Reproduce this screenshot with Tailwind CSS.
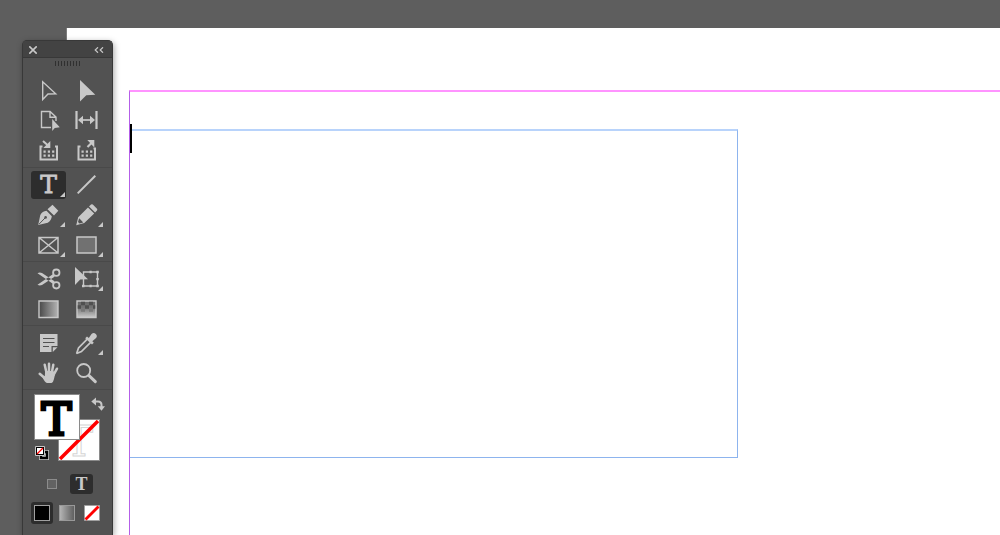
<!DOCTYPE html>
<html lang="en">
<head>
    <meta charset="UTF-8">
    <meta name="viewport" content="width=device-width, initial-scale=1.0">
    <title>Layout Editor</title>
    <script src="https://cdn.jsdelivr.net/npm/@tailwindcss/browser@4"></script>
</head>
<body class="relative h-screen overflow-hidden bg-[#5e5e5e] font-['Liberation_Sans',sans-serif]">

    <!-- Document page with its margin guides -->
    <main class="absolute top-7 right-0 bottom-0 left-[66px] flex border-l border-[#7c7c7c] bg-white pt-[62px] pl-[62px]">
        <section class="flex-1 border-t-2 border-l border-t-[#ff94ff] border-l-[#b45ee8] pt-[37px]">
            <div class="relative h-[329px] w-[69.9%]">
                <textarea aria-label="Text frame" class="block h-full w-full resize-none border border-t-2 border-l-0 border-[#8db4ee] border-t-[#b8d3fb] outline-none"></textarea>
                <span class="absolute -top-[5px] left-0 h-[29px] w-0.5 bg-black"></span>
            </div>
        </section>
    </main>

    <!-- Tools panel -->
    <aside class="absolute top-10 bottom-0 left-[22px] w-[91px] rounded-t-[5px] border border-b-0 border-[#383838] bg-[#525252] text-[#c8c8c8] shadow-[1px_2px_6px_rgba(0,0,0,0.35)]">
        <header class="flex h-4 items-center justify-between rounded-t bg-[#434343] px-1.5 pt-0.5">
            <button aria-label="Close">
                <svg class="block size-2" viewBox="0 0 8 8" fill="none" stroke="currentColor" stroke-width="1.6"><path d="M.3.3l7.400 7.400M7.700.3l-7.400 7.400"/></svg>
            </button>
            <button aria-label="Collapse">
                <svg class="mr-0.5 block h-1.5 w-2.5" viewBox="0 0 10 6" fill="none" stroke="currentColor" stroke-width="1.2"><path d="M4 .3L1.200 3 4 5.700M9 .3L6.200 3 9 5.700"/></svg>
            </button>
        </header>
        <div class="flex h-[19px] justify-center border-t border-[#383838] pt-[3px]">
            <svg class="block h-[5px] w-[25px]" viewBox="0 0 25 5" stroke="#303030" stroke-width="1"><path d="M.5 0v5M3.500 0v5M6.500 0v5M9.500 0v5M12.500 0v5M15.500 0v5M18.500 0v5M21.500 0v5M24.500 0v5"/></svg>
        </div>

        <!-- Selection -->
        <div class="grid grid-cols-[35px_35px] gap-x-[3px] gap-y-0.5 px-2 pt-px pb-0.5">
            <button class="h-7" aria-label="Selection">
                <svg class="block h-7 w-full" viewBox="0 0 35 28" fill="none" stroke="currentColor" stroke-width="1.4"><path d="M11.700 4.800v17.700l5.300-5.500 7.700-.2z"/></svg>
            </button>
            <button class="h-7" aria-label="Direct selection">
                <svg class="block h-7 w-full" viewBox="0 0 35 28" fill="currentColor"><path d="M11 3v21.500l6.300-6.300 9-.4z"/></svg>
            </button>
            <button class="h-7" aria-label="Page">
                <svg class="block h-7 w-full" viewBox="0 0 35 28"><path d="M20 20.500h-9.500v-16h8.500l6 5.500v4M19 4.500v5.700h6" fill="none" stroke="currentColor" stroke-width="1.4"/><path d="M21.200 12v12l2.600-3 5-.8z" fill="currentColor"/></svg>
            </button>
            <button class="h-7" aria-label="Gap">
                <svg class="block h-7 w-full" viewBox="0 0 35 28"><path d="M7.500 4v18M27.500 4v18" stroke="currentColor" stroke-width="2.200"/><path d="M11 13h13" stroke="currentColor" stroke-width="1.700"/><path d="M9 13l5-4.300v8.600zM26 13l-5-4.300v8.600z" fill="currentColor"/></svg>
            </button>
            <button class="h-7" aria-label="Content collector">
                <svg class="block h-7 w-full" viewBox="0 0 35 28"><path d="M11.500 9.500H9.500V22.500h16.500V9.500h-2" fill="none" stroke="currentColor" stroke-width="2"/><path d="M12 4l5 4.500" stroke="currentColor" stroke-width="2"/><path d="M19.300 4v7h-7z" fill="currentColor"/><path d="M12.500 13.500h2.200v2.200h-2.200zM16.800 13.500h2.200v2.200h-2.200zM21.100 13.500h2.200v2.200h-2.200zM12.500 17.500h2.200v2.200h-2.200zM16.800 17.500h2.200v2.200h-2.200zM21.100 17.500h2.200v2.200h-2.200z" fill="currentColor"/></svg>
            </button>
            <button class="h-7" aria-label="Content placer">
                <svg class="block h-7 w-full" viewBox="0 0 35 28"><path d="M11.500 9.500H9.500V22.500h16.500V11.500h-1.500" fill="none" stroke="currentColor" stroke-width="2"/><path d="M18.500 10l5-5" stroke="currentColor" stroke-width="2.200"/><path d="M25.300 3v7.500l-7-7.500z" fill="currentColor"/><path d="M12.500 13.500h2.200v2.200h-2.200zM16.800 13.500h2.200v2.200h-2.200zM21.100 13.500h2.200v2.200h-2.200zM12.500 17.500h2.200v2.200h-2.200zM16.800 17.500h2.200v2.200h-2.200zM21.100 17.500h2.200v2.200h-2.200z" fill="currentColor"/></svg>
            </button>
        </div>

        <!-- Drawing and type -->
        <div class="grid grid-cols-[35px_35px] gap-x-[3px] gap-y-0.5 border-t border-[#494949] px-2 pt-[3px] pb-0.5">
            <button class="h-7 rounded-[3px] bg-[#2d2d2d]" aria-label="Type" aria-pressed="true">
                <svg class="block h-7 w-full" viewBox="0 0 35 28" fill="currentColor"><text x="17.500" y="22" text-anchor="middle" class="font-['DejaVu_Serif',serif] text-[25px]" stroke="currentColor" stroke-width=".8">T</text><path d="M34 21v5h-5z"/></svg>
            </button>
            <button class="h-7" aria-label="Line">
                <svg class="block h-7 w-full" viewBox="0 0 35 28"><path d="M8.700 22.400L26.300 4.800" stroke="currentColor" stroke-width="2"/></svg>
            </button>
            <button class="h-7" aria-label="Pen">
                <svg class="block h-7 w-full" viewBox="0 0 35 28" fill="currentColor"><path d="M7.200 24L9.300 14q2-3.800 6.200-4.200l5.300 5.400q-.4 4.300-4 6.600zM16.500 8.300l5-4.500 5.800 6-4.300 4.700z"/><path d="M8 23.200l6.200-6.400" stroke="#525252" stroke-width="1"/><circle cx="14.600" cy="16.400" r="1.300" fill="#525252"/><path d="M34 21v5h-5z"/></svg>
            </button>
            <button class="h-7" aria-label="Pencil">
                <svg class="block h-7 w-full" viewBox="0 0 35 28" fill="currentColor"><path d="M7.200 24.200l2-8L19 6.400l6.200 6L15.300 22zM20 5.400l2-1.900q1-.6 1.800 0L28 7.700q.6.900 0 1.700l-1.900 2z"/><path d="M10.200 17.200l4 4.200-3.700 1.200-1.500-1.500z" fill="#525252"/><path d="M34 21v5h-5z"/></svg>
            </button>
            <button class="h-7" aria-label="Rectangle frame">
                <svg class="block h-7 w-full" viewBox="0 0 35 28"><path d="M8 6.500h19v15.500h-19zM8 6.500l19 15.500M27 6.500l-19 15.500" fill="none" stroke="currentColor" stroke-width="1.500"/><path d="M34 21v5h-5z" fill="currentColor"/></svg>
            </button>
            <button class="h-7" aria-label="Rectangle">
                <svg class="block h-7 w-full" viewBox="0 0 35 28"><path d="M8 6h19v16h-19z" fill="#717171" stroke="currentColor" stroke-width="1.500"/><path d="M34 21v5h-5z" fill="currentColor"/></svg>
            </button>
        </div>

        <!-- Transformation -->
        <div class="grid grid-cols-[35px_35px] gap-x-[3px] gap-y-0.5 border-t border-[#494949] px-2 pt-[3px] pb-0.5">
            <button class="h-7" aria-label="Scissors">
                <svg class="block h-7 w-full" viewBox="0 0 35 28"><g fill="none" stroke="currentColor" stroke-width="1.800"><circle cx="25.300" cy="7.700" r="3.200"/><circle cx="25.300" cy="20.300" r="3.200"/></g><path d="M6.500 8.200q2.200-1.200 4.500-.2l12.500 8.300-1.300 2.700zM6.500 19.800q2.200 1.200 4.500.2l12.500-8.300-1.300-2.700z" fill="currentColor"/></svg>
            </button>
            <button class="h-7" aria-label="Free transform">
                <svg class="block h-7 w-full" viewBox="0 0 35 28"><path d="M14.500 7h14v14h-14z" fill="none" stroke="currentColor" stroke-width="1.400"/><path d="M20.500 5.800h2.200v2.400h-2.200zM27.300 5.800h2.500v2.500h-2.500zM27.300 13h2.500v2.200h-2.500zM27.300 19.700h2.500v2.500h-2.500zM20.500 19.800h2.200v2.400h-2.200zM13 19.700h2.500v2.500h-2.500zM6 2v18l5.200-5.500 7.800-.3z" fill="currentColor"/><path d="M34 21v5h-5z" fill="currentColor"/></svg>
            </button>
            <button class="h-7" aria-label="Gradient swatch">
                <svg class="block h-7 w-full" viewBox="0 0 35 28"><defs><linearGradient id="swatch"><stop stop-color="#484848"/><stop offset="1" stop-color="#b4b4b4"/></linearGradient></defs><path d="M8 6h19v16.500h-19z" fill="url(#swatch)" stroke="currentColor" stroke-width="1.400"/></svg>
            </button>
            <button class="h-7" aria-label="Gradient feather">
                <svg class="block h-7 w-full" viewBox="0 0 35 28"><defs><linearGradient id="feather" x2="0" y2="1"><stop stop-color="#686868"/><stop offset=".4" stop-color="#747474"/><stop offset="1" stop-color="#c8c8c8"/></linearGradient></defs><path d="M8 6h19v16.500h-19z" fill="url(#feather)" stroke="currentColor" stroke-width="1.400"/><path d="M12 6.700h4v3.500h-4zM20 6.700h4v3.500h-4zM8.700 10.200h3.300v3.500h-3.300zM16 10.200h4v3.500h-4zM24 10.200h2.300v3.500h-2.300z" fill="#505050"/><path d="M12 13.700h4v3h-4zM20 13.700h4v3h-4z" fill="#787878"/></svg>
            </button>
        </div>

        <!-- Modification and navigation -->
        <div class="grid grid-cols-[35px_35px] gap-x-[3px] gap-y-0.5 border-t border-[#494949] px-2 pt-[3px] pb-0.5">
            <button class="h-7" aria-label="Note">
                <svg class="block h-7 w-full" viewBox="0 0 35 28"><path d="M9 5h17.500v12h-6v6H9zM21.800 18.300h4.700l-4.700 4.700z" fill="currentColor"/><path d="M12 9.500h11.500M12 13.500h11.500M12 17.500h6" stroke="#525252" stroke-width="1.200"/></svg>
            </button>
            <button class="h-7" aria-label="Eyedropper">
                <svg class="block h-7 w-full" viewBox="0 0 35 28"><path d="M18.700 9.700L9.500 19l-1.700 5 .3.300 4.300-1.700 9.500-9.500" fill="none" stroke="currentColor" stroke-width="1.700"/><path d="M16.200 9.200l1.800-1.800 1.800 1.600 2.700-4q2.200-2.200 4.300 0t0 4.200l-3.500 3 1.500 1.600-1.800 1.800z" fill="currentColor"/><path d="M34 21v5h-5z" fill="currentColor"/></svg>
            </button>
            <button class="h-7" aria-label="Hand">
                <svg class="block h-7 w-full" viewBox="0 0 35 28"><path d="M13.700 5.700l1.800 8M18 4.700v9M22.300 5.700l-1.500 8M26 9.700l-3.300 6M8.700 14.700l5 4.300" fill="none" stroke="currentColor" stroke-width="2.500" stroke-linecap="round"/><path d="M14.200 12h8l2 2.500-1.200 5.500q-.8 3.500-2.500 4h-4.500q-2-.5-4.500-5.500l2.300-1.500z" fill="currentColor"/></svg>
            </button>
            <button class="h-7" aria-label="Zoom">
                <svg class="block h-7 w-full" viewBox="0 0 35 28" fill="none" stroke="currentColor"><circle cx="14.700" cy="11.500" r="6.500" stroke-width="1.800"/><path d="M20 16.700l6.300 6" stroke-width="3" stroke-linecap="round"/></svg>
            </button>
        </div>

        <!-- Fill and stroke -->
        <div class="relative h-[76px] border-t border-[#494949]">
            <button class="absolute top-[29px] left-[35px] size-[42px] border border-[#8a8a8a] bg-white" aria-label="Stroke">
                <svg class="block size-10" viewBox="0 0 40 40"><text x="20" y="36" text-anchor="middle" fill="#fff" stroke="#d6d6d6" stroke-width="1" class="font-['DejaVu_Serif',serif] text-[42px]">T</text><path d="M1 39L39 1" stroke="#ff0000" stroke-width="3.500"/></svg>
            </button>
            <button class="absolute top-1 left-[11px] size-[46px] border border-[#8a8a8a] bg-white" aria-label="Fill">
                <svg class="block size-11" viewBox="0 0 44 44"><text x="21.500" y="40" text-anchor="middle" stroke="#000" stroke-width="3" fill="#000" class="font-['DejaVu_Serif',serif] text-[45px]">T</text></svg>
            </button>
            <button class="absolute top-[7px] right-[7px] size-3.5" aria-label="Swap fill and stroke">
                <svg class="block size-3.5" viewBox="0 0 14 14"><path d="M3.500 4.500h3.500q3.500 0 3.500 3.500v2" fill="none" stroke="currentColor" stroke-width="2"/><path d="M.3 4.500L5 .5v8zM10.500 13.700l-3.800-4.500h7.300z" fill="currentColor"/></svg>
            </button>
            <button class="absolute top-14 left-3 size-3.5" aria-label="Default fill and stroke">
                <svg class="block size-3.5" viewBox="0 0 14 14"><path d="M6 6h6v6H6z" fill="none" stroke="#c8c8c8" stroke-width="4"/><path d="M6 6h6v6H6z" fill="none" stroke="#000" stroke-width="2.400"/><path d="M.5.5h9v9h-9z" fill="#000" stroke="#c8c8c8"/><path d="M2 2h6v6H2z" fill="#fff"/><path d="M2 8l6-6" stroke="#ff0000" stroke-width="1.300"/></svg>
            </button>
        </div>

        <!-- Formatting target -->
        <div class="flex items-center gap-[7px] pt-2 pl-[18px]">
            <button class="flex size-[22px] items-center justify-center" aria-label="Formatting affects container">
                <span class="size-2.5 border border-[#8c8c8c] bg-[#626262]"></span>
            </button>
            <button class="h-5 w-[23px] rounded-[3px] bg-[#2d2d2d] font-['Liberation_Serif',serif] text-lg leading-5 font-bold" aria-label="Formatting affects text" aria-pressed="true">T</button>
        </div>

        <!-- Apply color, gradient or none -->
        <div class="flex gap-[3px] pt-[7px] pl-2">
            <button class="flex size-[22px] items-center justify-center rounded-[3px] bg-[#2d2d2d]" aria-label="Apply color" aria-pressed="true">
                <span class="size-4 border border-[#a0a0a0] bg-black"></span>
            </button>
            <button class="flex size-[22px] items-center justify-center" aria-label="Apply gradient">
                <span class="size-4 border border-[#999999] bg-linear-to-r from-[#b4b4b4] to-[#606060]"></span>
            </button>
            <button class="flex size-[22px] items-center justify-center" aria-label="Apply none">
                <svg class="block size-4" viewBox="0 0 16 16"><path d="M.5.5h15v15h-15z" fill="#fff" stroke="#a0a0a0"/><path d="M1.500 14.500l13-13" stroke="#ff0000" stroke-width="2.800"/></svg>
            </button>
        </div>
    </aside>
</body>
</html>
